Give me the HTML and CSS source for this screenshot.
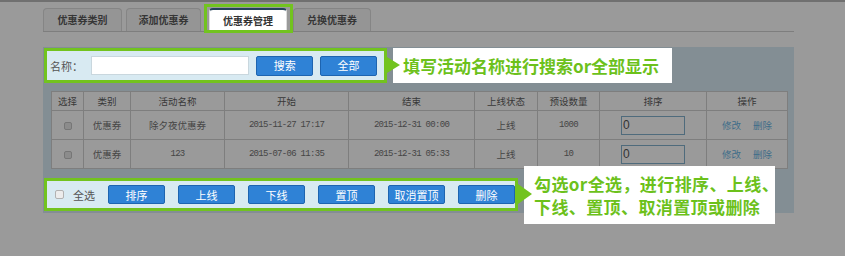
FILE: index.html
```html
<!DOCTYPE html>
<html lang="zh-CN">
<head>
    <meta charset="UTF-8">
    <title>优惠券管理</title>
    <link rel="stylesheet" href="styles.css">
</head>
<body>
    <div class="topline"></div>
    <div class="page">
        <div class="tabs">
            <span class="tab t1">优惠券类别</span>
            <span class="tab t2">添加优惠券</span>
            <span class="tab active">优惠券管理</span>
            <span class="tab t4">兑换优惠券</span>
        </div>

        <div class="panel">
            <div class="search hl">
                <label class="search-label">名称：</label>
                <input type="text" class="name-input">
                <button class="btn">搜索</button>
                <button class="btn">全部</button>
                <div class="tip tip-search">填写活动名称进行搜索or全部显示</div>
            </div>

            <table class="list">
                <colgroup>
                    <col style="width:32px"><col style="width:47px"><col style="width:94px">
                    <col style="width:124px"><col style="width:126px"><col style="width:63px">
                    <col style="width:62px"><col style="width:107px"><col style="width:81px">
                </colgroup>
                <tr>
                    <th>选择</th><th>类别</th><th>活动名称</th><th>开始</th><th>结束</th>
                    <th>上线状态</th><th>预设数量</th><th>排序</th><th>操作</th>
                </tr>
                <tr>
                    <td><span class="check"></span></td>
                    <td>优惠券</td>
                    <td>除夕夜优惠券</td>
                    <td class="num">2015-11-27 17:17</td>
                    <td class="num">2015-12-31 00:00</td>
                    <td>上线</td>
                    <td class="num">1000</td>
                    <td><input type="text" class="sort-input" value="0"></td>
                    <td><a class="op">修改</a><a class="op">删除</a></td>
                </tr>
                <tr>
                    <td><span class="check"></span></td>
                    <td>优惠券</td>
                    <td class="num">123</td>
                    <td class="num">2015-07-06 11:35</td>
                    <td class="num">2015-12-31 05:33</td>
                    <td>上线</td>
                    <td class="num">10</td>
                    <td><input type="text" class="sort-input" value="0"></td>
                    <td><a class="op">修改</a><a class="op">删除</a></td>
                </tr>
            </table>

            <div class="actions hl">
                <span class="check light"></span>
                <span class="all-label">全选</span>
                <button class="btn sm">排序</button>
                <button class="btn sm">上线</button>
                <button class="btn sm">下线</button>
                <button class="btn sm">置顶</button>
                <button class="btn sm">取消置顶</button>
                <button class="btn sm">删除</button>
                <div class="tip tip-actions">勾选or全选，进行排序、上线、<br>下线、置顶、取消置顶或删除</div>
            </div>
        </div>
    </div>
</body>
</html>
```

FILE: styles.css
```css
body {
    margin: 0;
    background-color: #9a9a9a;
    font-family: "Noto Sans CJK SC", sans-serif;
    width: 845px;
    height: 256px;
    overflow: hidden;
}
.topline {
    height: 2px;
    background-color: #707070;
}
.page {
    margin-left: 43px;
    width: 751px;
}

/* tabs */
.tabs {
    display: flex;
    padding-top: 6px;
    border-bottom: 1px solid #7e7e7e;
    height: 23px;
}
.tab {
    position: relative;
    box-sizing: border-box;
    height: 23px;
    line-height: 22px;
    text-align: center;
    font-size: 10px;
    font-weight: bold;
    color: #363636;
    background-color: #959595;
    border: 1px solid #858585;
    border-bottom: none;
    border-radius: 4px 4px 0 0;
}
.t1 { width: 79px; }
.t2 { width: 75px; margin-left: 4px; }
.t4 { width: 78px; margin-left: 6px; }
.tab.active {
    width: 78px;
    margin-left: 8px;
    background-color: #fff;
    border: 1px solid #dcdcdc;
    border-top: 2px solid #24435a;
    border-bottom: none;
    color: #333;
}
.tab.active::after {
    content: "";
    position: absolute;
    left: -6px;
    right: -7px;
    top: -6px;
    bottom: -2px;
    border: 3px solid #72c31f;
}

/* panel */
.panel {
    margin-top: 15px;
    background-color: #838e94;
    padding: 1px 0 2px;
}
.hl {
    position: relative;
    display: flex;
    align-items: center;
    box-sizing: border-box;
    background-color: #d8eaf2;
    border: 3px solid #72c31f;
    margin-left: 1px;
}
.search {
    width: 343px;
    height: 35px;
    padding-left: 3px;
}
.search-label {
    width: 42px;
    font-size: 11px;
    color: #555;
}
.name-input {
    box-sizing: border-box;
    width: 158px;
    height: 19px;
    border: 1px solid #c9d7de;
    background: #fff;
    padding: 0;
    margin: 0 7px 0 0;
}
.btn {
    box-sizing: border-box;
    width: 58px;
    height: 20px;
    margin: 0 7px 0 0;
    padding: 0;
    background-color: #2f82d6;
    border: 1px solid #1d64b0;
    border-radius: 2px;
    color: #fff;
    font-family: "Noto Sans CJK SC", sans-serif;
    font-size: 11px;
    line-height: 17px;
}
.btn.sm {
    width: 57px;
    height: 19px;
    margin: 0 13px 0 0;
    line-height: 16px;
}
.btn.sm:last-of-type {
    margin-right: 0;
}

/* callouts */
.tip {
    position: absolute;
    background-color: #fff;
    color: #6cc11b;
    font-weight: bold;
    box-sizing: border-box;
    white-space: nowrap;
}
.tip::before {
    content: "";
    position: absolute;
    left: -6px;
    border-left: 13px solid #72c31f;
    border-top: 8px solid transparent;
    border-bottom: 8px solid transparent;
}
.tip-search {
    left: calc(100% + 9px);
    top: -3px;
    width: 279px;
    height: 35px;
    padding-left: 10px;
    font-size: 17px;
    line-height: 35px;
}
.tip-search::before {
    top: 9px;
}
.tip-actions {
    left: calc(100% + 9px);
    top: -15px;
    width: 251px;
    height: 58px;
    padding: 6px 0 0 10px;
    font-size: 17px;
    line-height: 23px;
    letter-spacing: 0.4px;
}
.tip-actions::before {
    top: 18px;
    border-top-width: 10px;
    border-bottom-width: 10px;
    left: -6px;
    border-left-width: 14px;
}

/* table */
.list {
    margin: 8px 0 0 8px;
    width: 736px;
    table-layout: fixed;
    border-collapse: collapse;
    background-color: #9a9a9a;
}
.list th, .list td {
    border: 1px solid #7e7e7e;
    padding: 0;
    text-align: center;
    font-size: 9.5px;
    font-weight: normal;
    color: #383838;
}
.list th {
    height: 18px;
}
.list td {
    height: 28px;
    color: #454545;
}
.list td.num {
    font-family: "Liberation Mono", monospace;
    font-size: 9px;
    letter-spacing: -0.7px;
}
.check {
    display: inline-block;
    box-sizing: border-box;
    width: 8px;
    height: 8px;
    border: 1px solid #767676;
    border-radius: 2px;
    background-color: #8c8c8c;
    vertical-align: middle;
}
.check.light {
    width: 9px;
    height: 9px;
    margin-left: 8px;
    border-color: #b2b2b2;
    background-color: #ececec;
}
.all-label {
    margin: 0 13px 0 9px;
    font-size: 11px;
    color: #555;
}
.sort-input {
    box-sizing: border-box;
    width: 64px;
    height: 19px;
    padding: 0 0 0 1px;
    border: 1px solid #4f6b7c;
    background-color: #9a9a9a;
    color: #333;
    font-family: "Liberation Sans", sans-serif;
    font-size: 12px;
    vertical-align: middle;
}
.op {
    color: #3f6d89;
    margin: 0 6px;
}

/* bottom bar */
.actions {
    margin-top: 9px;
    width: 474px;
    height: 33px;
}
```
